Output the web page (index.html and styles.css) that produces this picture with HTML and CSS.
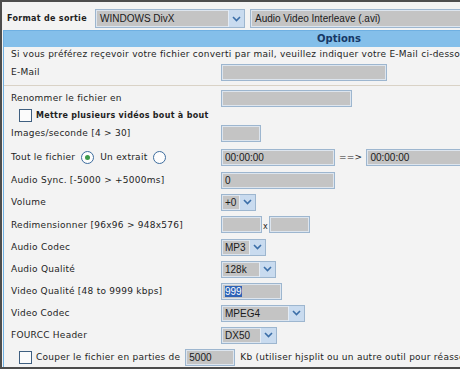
FILE: index.html
```html
<!DOCTYPE html>
<html>
<head>
    <meta charset="UTF-8">
    <title>Options de conversion</title>
    <link rel="stylesheet" href="styles.css">
</head>
<body>
<div class="frame">

    <div class="topbar">
        <span class="toplabel">Format de sortie</span>
        <span class="sel big" style="width: 150px;">
            <span class="val">WINDOWS DivX</span>
            <span class="arr"><svg width="9" height="6" viewBox="0 0 9 6"><path d="M1 1 L4.5 4.5 L8 1" fill="none" stroke="#3b6ea8" stroke-width="1.6"/></svg></span>
        </span>
        <span class="sel big" style="width: 240px;">
            <span class="val">Audio Video Interleave (.avi)</span>
        </span>
    </div>

    <div class="panel">
        <div class="head">Options</div>

        <div class="row note">Si vous préférez reçevoir votre fichier converti par mail, veuillez indiquer votre E-Mail ci-dessous</div>

        <div class="row">
            <span class="lbl">E-Mail</span>
            <span class="field" style="width: 166px;"></span>
        </div>

        <div class="sep"></div>

        <div class="row">
            <span class="lbl">Renommer le fichier en</span>
            <span class="field" style="width: 131px;"></span>
        </div>

        <div class="row short">
            <span class="box"></span>
            <b>Mettre plusieurs vidéos bout à bout</b>
        </div>

        <div class="row tall">
            <span class="lbl">Images/seconde [4 &gt; 30]</span>
            <span class="field" style="width: 40px;"></span>
        </div>

        <div class="row tall">
            <span class="lbl">Tout le fichier <span class="radio on"></span> Un extrait <span class="radio"></span></span>
            <span class="field" style="width: 114px;">00:00:00</span>
            <span class="arrow-txt">==&gt;</span>
            <span class="field" style="width: 120px;">00:00:00</span>
        </div>

        <div class="row">
            <span class="lbl">Audio Sync. [-5000 &gt; +5000ms]</span>
            <span class="field" style="width: 114px;">0</span>
        </div>

        <div class="row">
            <span class="lbl">Volume</span>
            <span class="sel" style="width: 35px;">
                <span class="val">+0</span>
                <span class="arr"><svg width="9" height="6" viewBox="0 0 9 6"><path d="M1 1 L4.5 4.5 L8 1" fill="none" stroke="#3b6ea8" stroke-width="1.6"/></svg></span>
            </span>
        </div>

        <div class="row h23">
            <span class="lbl">Redimensionner [96x96 &gt; 948x576]</span>
            <span class="field" style="width: 41px;"></span>
            <span class="times">x</span>
            <span class="field" style="width: 41px;"></span>
        </div>

        <div class="row">
            <span class="lbl">Audio Codec</span>
            <span class="sel" style="width: 45px;">
                <span class="val">MP3</span>
                <span class="arr"><svg width="9" height="6" viewBox="0 0 9 6"><path d="M1 1 L4.5 4.5 L8 1" fill="none" stroke="#3b6ea8" stroke-width="1.6"/></svg></span>
            </span>
        </div>

        <div class="row">
            <span class="lbl">Audio Qualité</span>
            <span class="sel" style="width: 55px;">
                <span class="val">128k</span>
                <span class="arr"><svg width="9" height="6" viewBox="0 0 9 6"><path d="M1 1 L4.5 4.5 L8 1" fill="none" stroke="#3b6ea8" stroke-width="1.6"/></svg></span>
            </span>
        </div>

        <div class="row">
            <span class="lbl">Video Qualité [48 to 9999 kbps]</span>
            <span class="field" style="width: 61px;"><span class="picked">999</span></span>
        </div>

        <div class="row">
            <span class="lbl">Video Codec</span>
            <span class="sel" style="width: 84px;">
                <span class="val">MPEG4</span>
                <span class="arr"><svg width="9" height="6" viewBox="0 0 9 6"><path d="M1 1 L4.5 4.5 L8 1" fill="none" stroke="#3b6ea8" stroke-width="1.6"/></svg></span>
            </span>
        </div>

        <div class="row">
            <span class="lbl">FOURCC Header</span>
            <span class="sel" style="width: 56px;">
                <span class="val">DX50</span>
                <span class="arr"><svg width="9" height="6" viewBox="0 0 9 6"><path d="M1 1 L4.5 4.5 L8 1" fill="none" stroke="#3b6ea8" stroke-width="1.6"/></svg></span>
            </span>
        </div>

        <div class="row">
            <span class="box"></span>
            <span class="cut">Couper le fichier en parties de</span>
            <span class="field" style="width: 50px;">5000</span>
            <span class="after">Kb (utiliser hjsplit ou un autre outil pour réassembler les parties)</span>
        </div>
    </div>

</div>
</body>
</html>
```

FILE: styles.css
```css
html,
body {
    margin: 0;
    padding: 0;
    background-color: #f3f3f3;
}

body {
    width: 460px;
    height: 369px;
    overflow: hidden;
}

.frame {
    box-sizing: border-box;
    width: 700px;
    height: 369px;
    border: 2px solid #4d4d4d;
    border-right: none;
    overflow: hidden;
    font-family: "DejaVu Sans", Verdana, sans-serif;
    font-size: 9px;
    letter-spacing: 0.25px;
    color: #1e1e1e;
    background-color: #f3f3f3;
}

.topbar {
    display: flex;
    align-items: center;
    height: 28px;
    padding-top: 5px;
    box-sizing: border-box;
    padding-left: 5px;
}

.toplabel,
.row b {
    font-size: 8px;
    font-weight: bold;
    letter-spacing: 0.3px;
}

.toplabel {
    width: 88px;
}

.sel,
.field {
    box-sizing: border-box;
    display: inline-flex;
    align-items: center;
    height: 17px;
    background-color: #c4c4c4;
    border: 1px solid #9db6cf;
    box-shadow: inset 0 0 0 1px #dde5ee;
    font-family: "Liberation Sans", Arial, sans-serif;
    font-size: 10px;
    letter-spacing: 0;
    color: #1a1a1a;
    padding-left: 3px;
    overflow: hidden;
    white-space: nowrap;
}

.sel {
    justify-content: space-between;
    padding-right: 0;
}

.sel.big {
    height: 19px;
    margin-right: 5px;
    padding-left: 4px;
}

.arr {
    display: flex;
    align-items: center;
    justify-content: center;
    width: 15px;
    height: 100%;
    background-color: #c9dbef;
    border-left: 1px solid #e4ecf5;
}

.panel {
    margin-left: 1px;
    border: 1px solid #6fb0e2;
    border-bottom: none;
    width: 670px;
    height: 340px;
}

.head {
    height: 16px;
    line-height: 16px;
    background-color: #84bfea;
    text-align: center;
    font-size: 10px;
    font-weight: bold;
    letter-spacing: 0;
    color: #163866;
}

.row {
    display: flex;
    align-items: center;
    height: 22px;
    padding-left: 7px;
    white-space: nowrap;
}

.row.note {
    height: 14px;
}

.row.short {
    height: 12px;
    padding-left: 15px;
}

.row.tall {
    height: 24px;
}

.row.h23 {
    height: 23px;
}

.lbl {
    display: inline-flex;
    align-items: center;
    width: 210px;
    flex-shrink: 0;
}

.sep {
    height: 1px;
    margin: 2px 0 1px;
    background-color: #d9d2c6;
}

.box {
    box-sizing: border-box;
    width: 13px;
    height: 13px;
    border: 1px solid #3f5f80;
    background-color: #fbfbfb;
    margin-right: 4px;
    flex-shrink: 0;
}

.row .box {
    margin-left: 8px;
}

.row.short .box {
    margin-left: 0;
}

.radio {
    box-sizing: border-box;
    display: inline-flex;
    align-items: center;
    justify-content: center;
    width: 13px;
    height: 13px;
    border: 1px solid #3d6d9e;
    border-radius: 50%;
    background-color: #fdfdfd;
    margin: 0 6px 0 6px;
}

.radio.on::after {
    content: "";
    width: 5px;
    height: 5px;
    border-radius: 50%;
    background-color: #3c9a4a;
}

.arrow-txt {
    margin: 0 4px 0 4px;
}

.times {
    margin: 4px 1px 0;
    font-size: 8px;
}

.picked {
    background-color: #2f63b6;
    color: #ffffff;
}

.cut {
    margin-right: 5px;
}

.after {
    margin-left: 5px;
}
```
